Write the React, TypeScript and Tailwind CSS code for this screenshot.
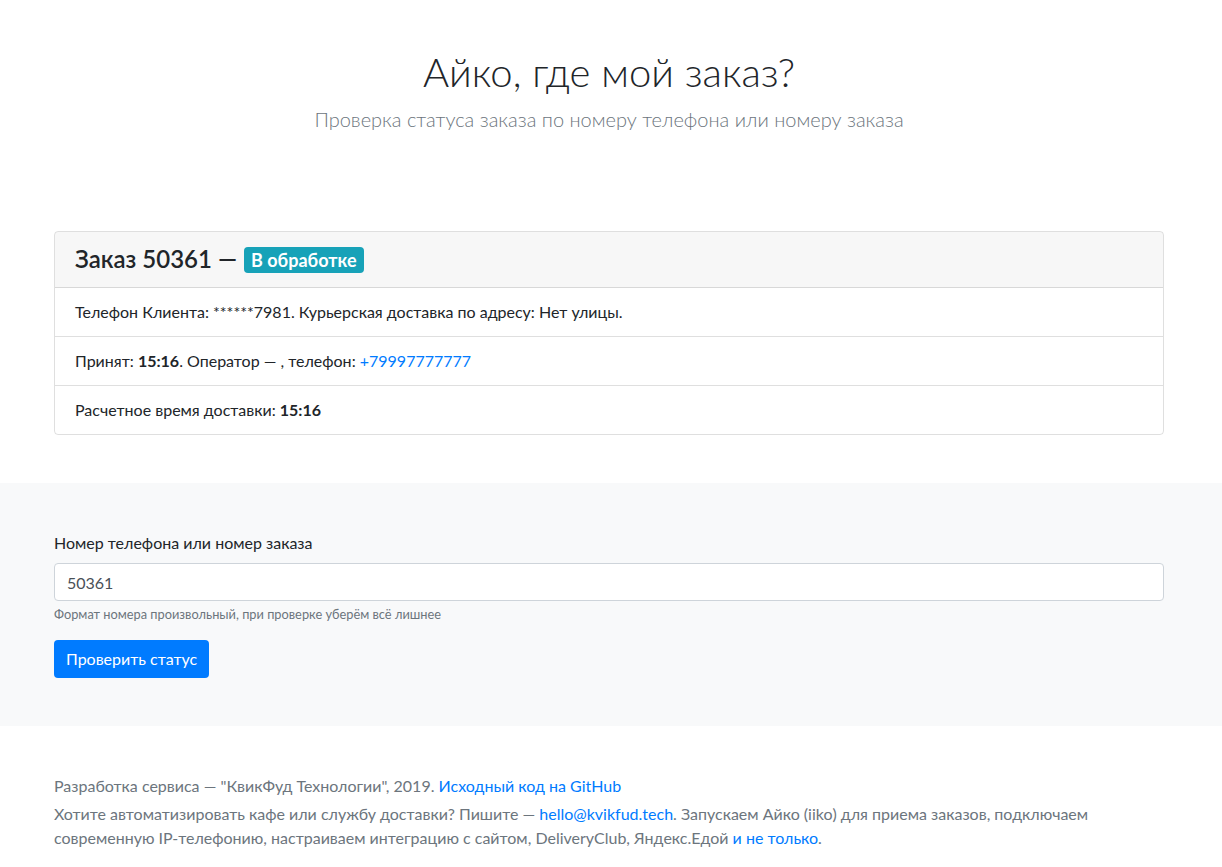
const App = () => {
   const font = "font-['Lato','Liberation_Sans',sans-serif]";

   return (
      <div className={`${font} text-[#212529] text-base leading-6 bg-white min-h-screen`}>
         <div className="pt-12 pb-12">
            <div className="w-[1110px] ml-[54px] text-center">
               <h1 className="text-[40px] leading-[1.2] font-light mb-2">Айко, где мой заказ?</h1>
               <p className="text-[20px] leading-[30px] font-light text-[#6c757d]">
                  Проверка статуса заказа по номеру телефона или номеру заказа
               </p>
            </div>
         </div>

         <div className="w-[1110px] ml-[54px] mt-[49px] mb-12">
            <div className="border border-[rgba(0,0,0,0.125)] rounded-[4px] overflow-hidden">
               <div className="bg-[rgba(0,0,0,0.03)] px-5 py-3 border-b border-[rgba(0,0,0,0.125)]">
                  <h4 className="h-[31px] flex items-center text-[24px] font-semibold leading-[1.2]">
                     Заказ 50361 —
                     <span className="ml-[7px] inline-block bg-[#17a2b8] text-white text-[18px] font-bold leading-none px-[7px] py-[4px] rounded-[4px]">
                        В обработке
                     </span>
                  </h4>
               </div>
               <div className="px-5 py-3">
                  Телефон Клиента: ******7981. Курьерская доставка по адресу: Нет улицы.
               </div>
               <div className="px-5 py-3 border-t border-[rgba(0,0,0,0.125)]">
                  Принят: <b className="font-bold">15:16</b>. Оператор — , телефон:{' '}
                  <a href="#" className="text-[#007bff]">+79997777777</a>
               </div>
               <div className="px-5 py-3 border-t border-[rgba(0,0,0,0.125)]">
                  Расчетное время доставки: <b className="font-bold">15:16</b>
               </div>
            </div>
         </div>

         <div className="bg-[#f8f9fa] py-12">
            <div className="w-[1110px] ml-[54px]">
               <div className="mb-4">
                  <label className="block mb-2">Номер телефона или номер заказа</label>
                  <input
                     type="text"
                     defaultValue="50361"
                     className="block w-full h-[38px] px-3 bg-white border border-[#ced4da] rounded-[4px] text-[#495057] outline-none"
                  />
                  <small className="block mt-1 text-[12.8px] leading-[19.2px] text-[#6c757d]">
                     Формат номера произвольный, при проверке уберём всё лишнее
                  </small>
               </div>
               <button className="h-[38px] px-3 bg-[#007bff] text-white rounded-[4px]">Проверить статус</button>
            </div>
         </div>

         <div className="py-12">
            <div className="w-[1110px] ml-[54px] text-[#6c757d]">
               <p className="mb-1">
                  Разработка сервиса — "КвикФуд Технологии", 2019.{' '}
                  <a href="#" className="text-[#007bff]">Исходный код на GitHub</a>
               </p>
               <p>
                  Хотите автоматизировать кафе или службу доставки? Пишите —{' '}
                  <a href="#" className="text-[#007bff]">hello@kvikfud.tech</a>. Запускаем Айко (iiko) для приема
                  заказов, подключаем современную IP-телефонию, настраиваем интеграцию с сайтом, DeliveryClub,
                  Яндекс.Едой <a href="#" className="text-[#007bff]">и не только</a>.
               </p>
            </div>
         </div>
      </div>
   );
};

export default App;
